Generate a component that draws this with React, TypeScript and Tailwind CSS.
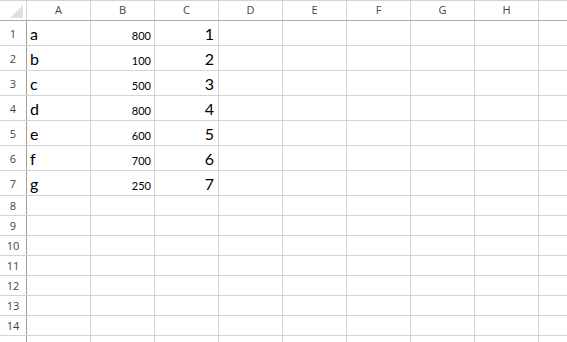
import React from "react";

const cols = ["A", "B", "C", "D", "E", "F", "G", "H", ""];

type Row = { a?: string; b?: string; c?: string };

const data: Row[] = [
  { a: "a", b: "800", c: "1" },
  { a: "b", b: "100", c: "2" },
  { a: "c", b: "500", c: "3" },
  { a: "d", b: "800", c: "4" },
  { a: "e", b: "600", c: "5" },
  { a: "f", b: "700", c: "6" },
  { a: "g", b: "250", c: "7" },
];

// rows 8..15 are empty and shorter
const rows: Row[] = [...data, ...Array.from({ length: 8 }, () => ({}))];

const headFont = { fontFamily: "'Open Sans', 'Noto Sans', sans-serif" };
const cellFont = { fontFamily: "Lato, 'Open Sans', sans-serif" };

function Corner() {
  return (
    <div className="w-[27px] shrink-0 border-r border-r-[#d4d4d4] flex items-end justify-end pr-[3px] pb-[2px]">
      <svg width="13" height="13" viewBox="0 0 13 13">
        <polygon points="13,0 13,13 0,13" fill="#dfdfdf" />
      </svg>
    </div>
  );
}

export default function App() {
  return (
    <div className="w-[567px] h-[342px] overflow-hidden bg-white">
      {/* column headers */}
      <div className="flex h-[21px] border-t border-t-[#d4d4d4] border-b border-b-[#ababab]" style={headFont}>
        <Corner />
        {cols.map((c, i) => (
          <div
            key={i}
            className="w-[64px] shrink-0 border-r border-r-[#d4d4d4] flex items-center justify-center text-[11px] text-[#444] pb-[1px]"
          >
            {c}
          </div>
        ))}
      </div>

      {rows.map((r, i) => {
        const tall = i < data.length;
        // last row is only a sliver in view, its number sits below the edge
        const label = i < 14 ? i + 1 : "";
        return (
          <div key={i} className={`flex border-b border-b-[#d4d4d4] ${tall ? "h-[25px]" : "h-[20px]"}`}>
            <div
              className="w-[27px] shrink-0 border-r border-r-[#9f9f9f] flex items-center justify-center pt-[2px] text-[11px] text-[#444]"
              style={headFont}
            >
              {label}
            </div>
            <div
              className="w-[64px] shrink-0 border-r border-r-[#d4d4d4] flex items-end pl-[3px] pb-[3px] text-[16px] leading-none text-black"
              style={cellFont}
            >
              {r.a}
            </div>
            <div
              className="w-[64px] shrink-0 border-r border-r-[#d4d4d4] flex items-end justify-end pr-[3px] pb-[4px] text-[11px] leading-none text-black"
              style={cellFont}
            >
              {r.b}
            </div>
            <div
              className="w-[64px] shrink-0 border-r border-r-[#d4d4d4] flex items-end justify-end pr-[4px] pb-[3px] text-[16px] leading-none text-black"
              style={cellFont}
            >
              {r.c}
            </div>
            {cols.slice(3).map((_, j) => (
              <div key={j} className="w-[64px] shrink-0 border-r border-r-[#d4d4d4]" />
            ))}
          </div>
        );
      })}
    </div>
  );
}
